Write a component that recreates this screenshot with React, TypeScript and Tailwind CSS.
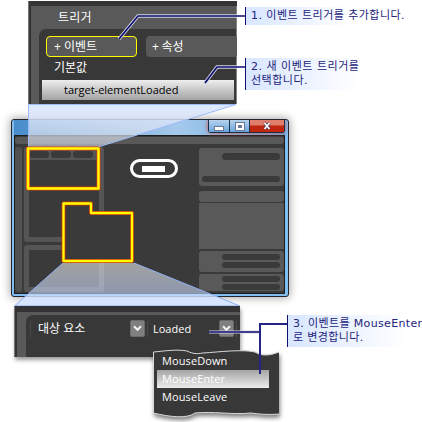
import type { ReactNode } from "react";

const uiFont = "font-['Open_Sans','Noto_Sans_CJK_KR',sans-serif]";
const noteFont = "font-['DejaVu_Sans','Noto_Sans_CJK_KR',sans-serif]";

function Note({ place, children }: { place: string; children: ReactNode }) {
  return (
    <div
      className={`absolute border-l border-[#10106e] bg-linear-to-r from-[#d8e6ff] to-white/0 pl-[5px] whitespace-nowrap text-[#24247c] ${noteFont} ${place}`}
    >
      {children}
    </div>
  );
}

function Pill({ size }: { size: string }) {
  return <div className={`rounded-full bg-[#3a3a3a] ${size}`} />;
}

function Chevron() {
  return (
    <span className="flex h-[17px] w-[15px] shrink-0 items-center justify-center rounded-[2px] border border-[#6b6b6b] bg-[#808080]">
      <svg width="9" height="7" viewBox="0 0 9 7" fill="none" stroke="#f2f2f2" strokeWidth="2">
        <path d="M1 1.3 4.5 4.8 8 1.3" />
      </svg>
    </span>
  );
}

function TriggerPanel() {
  return (
    <section
      className={`absolute top-px left-[28px] h-[103px] w-[209px] overflow-hidden border-l border-[#777] bg-[#353535] pt-[5px] pl-[2px] text-white ${uiFont}`}
    >
      <div className="h-full border-r border-[#858585] bg-[#595959] pl-2">
        <h2 className="h-[23px] pl-[19px] text-[12px] leading-[23px] font-normal tracking-[0.2px]">트리거</h2>
        <div className="h-[75px] rounded-tl-[7px] bg-[#383838] pt-[7px]">
          <div className="flex gap-[9px] pl-[7px] text-[12px] leading-[19px] whitespace-nowrap">
            <button className="h-[21px] w-[91px] shrink-0 rounded-[4px] border border-[#ffff00] bg-[#595959] pl-[7px] text-left">
              + 이벤트
            </button>
            <button className="h-[21px] w-[92px] shrink-0 rounded-[4px] bg-[#595959] pl-[6px] text-left tracking-[-0.2px]">
              + 속성
            </button>
          </div>
          <div className="h-[23px] pl-[15px] text-[12px] leading-[22px]">기본값</div>
          <div className="ml-[3px] h-[20px] w-[192px] bg-linear-to-b from-[#eee] to-[#a4a4a4] pl-[22px] text-[11px] leading-[20px] whitespace-nowrap text-black">
            target-elementLoaded
          </div>
        </div>
      </div>
    </section>
  );
}

function AppWindow() {
  return (
    <section className="absolute top-[119px] left-[11px] h-[178px] w-[278px] overflow-hidden rounded-[3px] border border-[#20272e] bg-[#80bdf0] pr-[3px] pb-[2px] pl-[2px] shadow-[0_0_8px_1px_rgba(0,0,0,0.35)]">
      <header className="flex h-[15px] justify-end bg-linear-to-r from-[#478ccc] via-[#a6c9eb] via-60% to-[#65a9e4]">
        <div className="flex h-[13px] rounded-b-[3px] border-x border-b border-[#182d46] shadow-[0_0_4px_#d94e39]">
          <div className="flex w-[20px] items-end justify-center bg-linear-to-b from-[#b8d3ec] to-[#6aa4dc] pb-[2px]">
            <div className="h-[3px] w-[8px] bg-white outline outline-[#667a96]" />
          </div>
          <div className="flex w-[21px] items-center justify-center border-x border-[#182d46] bg-linear-to-b from-[#b8d3ec] to-[#6aa4dc]">
            <div className="h-[7px] w-[8px] border-2 border-white bg-[#667a96] outline outline-[#667a96]" />
          </div>
          <div className="flex w-[34px] items-center justify-center bg-linear-to-b from-[#df7e6c] from-40% to-[#c1260c] to-50%">
            <svg width="8" height="8" viewBox="0 0 8 8">
              <path d="M1.500 1 6.500 7M6.500 1 1.500 7" stroke="#5c4a68" strokeWidth="3.200" />
              <path d="M1.500 1 6.500 7M6.500 1 1.500 7" stroke="#fff" strokeWidth="1.600" />
            </svg>
          </div>
        </div>
      </header>
      <div className="h-[159px] border border-[#1d1d1d] bg-[#3a3a3a] pt-px">
        <div className="h-[7px] rounded-[3px] bg-[#595959]" />
        <div className="mt-[3px] flex h-[145px]">
          <div className="w-[7px] rounded-[3px] bg-[#515151]" />
          <div className="ml-[2px] flex w-[80px] flex-col gap-[3px]">
            <div className="h-[95px] rounded-[3px] border-[5px] border-[#555] bg-[#3a3a3a]">
              <div className="-mt-[4px] flex h-[12px] items-center gap-[2px] bg-[#555]">
                <Pill size="h-[7px] w-[20px]" />
                <Pill size="h-[7px] w-[20px]" />
                <Pill size="h-[7px] w-[20px]" />
              </div>
            </div>
            <div className="h-[47px] rounded-[3px] border-[5px] border-[#555] bg-[#3a3a3a]" />
          </div>
          <div className="flex flex-1 justify-center pt-[12px] pl-[4px]">
            <div className="flex h-[19px] w-[48px] items-center justify-center rounded-full border-[3px] border-white">
              <div className="h-[6px] w-[23px] bg-white" />
            </div>
          </div>
          <div className="flex w-[85px] flex-col pt-px">
            <div className="flex h-[38px] flex-col items-end rounded-[3px] bg-[#595959] pt-[5px] pr-[4px]">
              <Pill size="h-[7px] w-[58px]" />
              <Pill size="mt-[16px] h-[6px] w-[78px]" />
            </div>
            <div className="mt-[5px] h-[11px] rounded-[3px] bg-[#595959]" />
            <div className="mt-px h-[46px] bg-[#595959]" />
            <div className="mt-[2px] flex h-[21px] flex-col items-end gap-[2px] rounded-[3px] bg-[#595959] pt-[3px] pr-[4px]">
              <Pill size="h-[6px] w-[58px]" />
              <Pill size="h-[6px] w-[58px]" />
            </div>
            <div className="mt-[2px] flex h-[17px] flex-col items-end gap-[2px] rounded-[3px] bg-[#595959] pt-[2px] pr-[4px]">
              <Pill size="h-[6px] w-[58px]" />
              <Pill size="h-[6px] w-[58px]" />
            </div>
          </div>
        </div>
      </div>
    </section>
  );
}

function Beams() {
  return (
    <svg className="absolute inset-0" width="422" height="422" viewBox="0 0 422 422" fill="none">
      <defs>
        <linearGradient id="upper" x1="0" y1="0" x2="0" y2="1">
          <stop offset="0" stopColor="#dae7ff" stopOpacity="0.95" />
          <stop offset="1" stopColor="#dadfe9" stopOpacity="0.6" />
        </linearGradient>
        <linearGradient id="lower" x1="0" y1="0" x2="0" y2="1">
          <stop offset="0" stopColor="#e6e6e6" stopOpacity="0.6" />
          <stop offset="0.7" stopColor="#c5d8fb" stopOpacity="0.6" />
          <stop offset="0.82" stopColor="#d5e4ff" stopOpacity="0.95" />
        </linearGradient>
      </defs>
      <path d="M28.5 104.5H236L98 147H28.5Z" fill="url(#upper)" />
      <path d="M28.5 147V104.5H236L98 147" stroke="#9dbbfa" />
      <path d="M14.5 306 63 263H134L240 306Z" fill="url(#lower)" />
      <path d="M63 263 14.5 306H240L134 263" stroke="#8fb0f4" />
      <g strokeLinejoin="round">
        <path d="M28 148.500H98.500V188.500H28Z" stroke="#d63b16" strokeWidth="4" />
        <path d="M28 148.500H98.500V188.500H28Z" stroke="#ffa000" strokeWidth="3" />
        <path d="M28 148.500H98.500V188.500H28Z" stroke="#ffff00" strokeWidth="1.800" />
        <path d="M63.500 203.500H91V213H132V261H63.500Z" fill="#3a3a3a" stroke="#c9300f" strokeWidth="4" />
        <path d="M63.500 203.500H91V213H132V261H63.500Z" stroke="#ffff00" strokeWidth="2.300" />
      </g>
    </svg>
  );
}

function EventPanel() {
  return (
    <section
      className={`absolute top-[306px] left-[14px] h-[51px] w-[226px] border-l border-[#777] bg-[#333] pt-[6px] pl-[2px] text-white shadow-[1px_3px_4px_rgba(0,0,0,0.4)] ${uiFont}`}
    >
      <div className="h-[45px] bg-[#595959] pt-[3px] pl-[9px]">
        <div className="flex h-[42px] rounded-tl-[7px] bg-[#383838] pt-[5px] pl-[4px] text-[12px] leading-[18px] whitespace-nowrap">
          <div className="flex h-[18px] w-[115px] justify-between rounded-[3px] border-l border-[#4b4b4b] pl-[7px]">
            <span>대상 요소</span>
            <Chevron />
          </div>
          <div className="ml-[2px] flex h-[18px] w-[90px] justify-between rounded-[3px] border-x border-[#4b4b4b] pr-[2px] pl-[5px]">
            <span className="text-[11px] font-medium">Loaded</span>
            <Chevron />
          </div>
        </div>
      </div>
    </section>
  );
}

function EventMenu() {
  return (
    <section className={`absolute top-[342px] left-[150px] h-[76px] w-[134px] text-white ${uiFont}`}>
      <svg className="absolute inset-0 drop-shadow-[1px_3px_2px_rgba(0,0,0,0.5)]" width="134" height="76" viewBox="0 0 134 76">
        <path
          d="M3.500 10C15 9 27 7 37 9C43 12 47 12 53 11C69 10 92 7 105 10C111 14 119 14 129 10V72C118 73 108 72 101 71C82 73 63 69 45 71C37 77 20 75 3.500 71Z"
          fill="#383838"
        />
        <path
          d="M3.500 71V10C15 9 27 7 37 9C43 12 47 12 53 11C69 10 92 7 105 10C111 14 119 14 129 10M129 72C118 73 108 72 101 71C82 73 63 69 45 71C37 77 20 75 3.500 71"
          fill="none"
          stroke="#d8d8d8"
        />
      </svg>
      <ul className="relative flex flex-col pt-[10px] pl-[7px] text-[11px] leading-[18px] font-medium tracking-[0.1px]">
        <li className="h-[18px] pl-[5px]">MouseDown</li>
        <li className="h-[18px] w-[112px] bg-linear-to-b from-[#a5a5a5] to-[#ececec] pl-[5px]">MouseEnter</li>
        <li className="h-[18px] pl-[5px]">MouseLeave</li>
      </ul>
    </section>
  );
}

function Leaders() {
  return (
    <svg className="absolute inset-0" width="422" height="422" viewBox="0 0 422 422" fill="none">
      <path d="M237 16H138L119 39M237 67H217L205 83" stroke="#d6d6e2" strokeWidth="3.500" />
      <path d="M245 16H138L119 39M245 67H217L205 83" stroke="#0d0d72" strokeWidth="1.700" />
      <path d="M209 332H261" stroke="#d6d6e2" strokeWidth="3" />
      <path d="M209 332H260" stroke="#0d0d72" strokeWidth="1.700" />
      <path d="M287 324H260V374" stroke="#242485" strokeWidth="2" />
    </svg>
  );
}

export default function App() {
  return (
    <main className="relative h-[422px] w-[422px] overflow-hidden bg-white">
      <AppWindow />
      <Beams />
      <TriggerPanel />
      <EventPanel />
      <EventMenu />
      <Leaders />
      <Note place="top-[7px] left-[245px] h-[18px] w-[110px] text-[11px] leading-[17px] tracking-[0.45px]">
        1. 이벤트 트리거를 추가합니다.
      </Note>
      <Note place="top-[58px] left-[245px] h-[32px] w-[115px] pt-[2px] text-[11px] leading-[14px] tracking-[0.5px]">
        2. 새 이벤트 트리거를
        <br />
        선택합니다.
      </Note>
      <Note place="top-[315px] left-[287px] h-[32px] w-[120px] pt-[2px] text-[11px] leading-[14px] tracking-[0.35px]">
        3. 이벤트를 MouseEnter
        <br />로 변경합니다.
      </Note>
    </main>
  );
}
